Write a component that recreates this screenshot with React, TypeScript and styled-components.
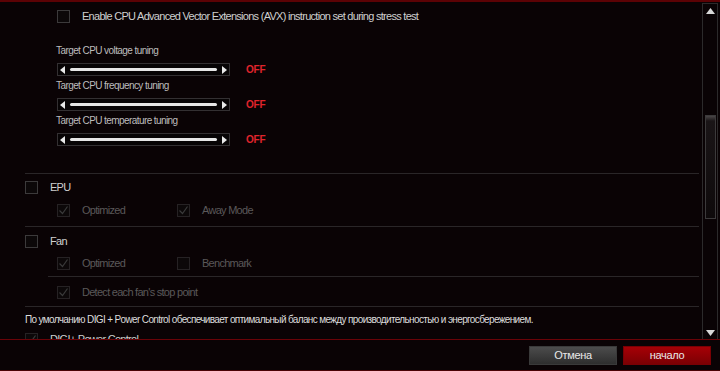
import styled, { createGlobalStyle } from "styled-components";

const Global = createGlobalStyle`
  html, body {
    margin: 0;
    padding: 0;
    background: #0a0305;
  }
  body {
    font-family: "Liberation Sans", Arial, sans-serif;
  }
`;

function Check({ checked, dim }: { checked?: boolean; dim?: boolean }) {
  return (
    <Box $dim={dim}>
      {checked && (
        <svg width="11" height="11" viewBox="0 0 11 11">
          <path d="M1.5 5.5 L4.5 8.5 L9.5 1.5" fill="none" stroke="#3a3a3a" strokeWidth="1.2" />
        </svg>
      )}
    </Box>
  );
}

function Slider() {
  return (
    <SliderRow>
      <SliderBox>
        <svg width="5" height="8" viewBox="0 0 5 8">
          <path d="M5 0 L0 4 L5 8 Z" fill="#e8e8e8" />
        </svg>
        <Track />
        <svg width="5" height="8" viewBox="0 0 5 8">
          <path d="M0 0 L5 4 L0 8 Z" fill="#e8e8e8" />
        </svg>
      </SliderBox>
      <Off>OFF</Off>
    </SliderRow>
  );
}

export default function App() {
  return (
    <Window>
      <Global />
      <Main>
        <Content>
          <Row $indent={32} $top={8}>
            <Check />
            <Label>Enable CPU Advanced Vector Extensions (AVX) instruction set during stress test</Label>
          </Row>
          <Tuning>
            <SmallLabel>Target CPU voltage tuning</SmallLabel>
            <Slider />
            <SmallLabel>Target CPU frequency tuning</SmallLabel>
            <Slider />
            <SmallLabel>Target CPU temperature tuning</SmallLabel>
            <Slider />
          </Tuning>
          <Divider $top={27} />
          <Row $indent={0} $top={7}>
            <Check />
            <Label>EPU</Label>
          </Row>
          <Row $indent={32} $top={10}>
            <Option>
              <Check checked dim />
              <Label $dim>Optimized</Label>
            </Option>
            <Check checked dim />
            <Label $dim>Away Mode</Label>
          </Row>
          <Divider $top={9} />
          <Row $indent={0} $top={8}>
            <Check />
            <Label>Fan</Label>
          </Row>
          <Row $indent={32} $top={9}>
            <Option>
              <Check checked dim />
              <Label $dim>Optimized</Label>
            </Option>
            <Check dim />
            <Label $dim>Benchmark</Label>
          </Row>
          <Divider $top={6} $indent={23} />
          <Row $indent={32} $top={9}>
            <Check checked dim />
            <Label $dim>Detect each fan's stop point</Label>
          </Row>
          <Divider $top={7} />
          <Note>
            По умолчанию DIGI + Power Control обеспечивает оптимальный баланс между производительностью и энергосбережением.
          </Note>
          <Row $indent={0} $top={6}>
            <Check checked dim />
            <Label>DIGI+ Power Control</Label>
          </Row>
        </Content>
        <Scrollbar>
          <svg width="9" height="6" viewBox="0 0 9 6">
            <path d="M0 6 L4.5 0 L9 6 Z" fill="#d8d8d8" />
          </svg>
          <ScrollTrack>
            <Thumb />
          </ScrollTrack>
          <svg width="9" height="6" viewBox="0 0 9 6">
            <path d="M0 0 L4.5 6 L9 0 Z" fill="#d8d8d8" />
          </svg>
        </Scrollbar>
      </Main>
      <Footer>
        <Button>Отмена</Button>
        <Button $primary>начало</Button>
      </Footer>
    </Window>
  );
}

const Window = styled.div`
  width: 720px;
  height: 371px;
  display: flex;
  flex-direction: column;
  background: #0a0305;
  border-top: 2px solid #5c0205;
  box-sizing: border-box;
  overflow: hidden;
`;

const Main = styled.div`
  display: flex;
  height: 337px;
  border-bottom: 1px solid #6a0308;
`;

const Content = styled.div`
  flex: 1;
  overflow: hidden;
  padding-left: 25px;
  padding-right: 3px;
`;

const Row = styled.div<{ $indent: number; $top: number }>`
  display: flex;
  align-items: center;
  height: 13px;
  margin-left: ${(p) => p.$indent}px;
  margin-top: ${(p) => p.$top}px;
  gap: 12px;
`;

const Option = styled.div`
  display: flex;
  align-items: center;
  gap: 12px;
  width: 108px;
`;

const Box = styled.div<{ $dim?: boolean }>`
  width: 13px;
  height: 13px;
  box-sizing: border-box;
  flex: none;
  border: 1px solid ${(p) => (p.$dim ? "#262224" : "#3c3a3b")};
  background: #0c0809;
  display: flex;
  align-items: center;
  justify-content: center;
`;

const Label = styled.span<{ $dim?: boolean }>`
  font-size: 11px;
  letter-spacing: -0.72px;
  line-height: 13px;
  color: ${(p) => (p.$dim ? "#5a5859" : "#cfcfcf")};
  white-space: nowrap;
`;

const Tuning = styled.div`
  margin-left: 31px;
  margin-top: 21px;
  display: flex;
  flex-direction: column;
`;

const SmallLabel = styled.div`
  font-size: 10px;
  letter-spacing: -0.58px;
  line-height: 14px;
  height: 14px;
  color: #bdbdbd;
  margin-top: 3px;
  &:first-child {
    margin-top: 0;
  }
`;

const SliderRow = styled.div`
  display: flex;
  align-items: center;
  margin-top: 5px;
  margin-left: 1px;
`;

const SliderBox = styled.div`
  width: 173px;
  height: 13px;
  box-sizing: border-box;
  border: 1px solid #333032;
  background: #070405;
  display: flex;
  align-items: center;
  padding: 0 2px 0 2px;
  gap: 5px;
`;

const Track = styled.div`
  flex: 1;
  height: 3px;
  border-radius: 2px;
  background: #e6e6e6;
`;

const Off = styled.span`
  margin-left: 16px;
  font-size: 10px;
  font-weight: bold;
  letter-spacing: -0.2px;
  color: #e0242c;
`;

const Divider = styled.div<{ $top: number; $indent?: number }>`
  height: 1px;
  background: #2a2628;
  margin-top: ${(p) => p.$top}px;
  margin-left: ${(p) => p.$indent || 0}px;
`;

const Note = styled.div`
  margin-top: 6px;
  font-size: 10px;
  letter-spacing: -0.64px;
  line-height: 14px;
  color: #dcdcdc;
  white-space: nowrap;
`;

const Scrollbar = styled.div`
  width: 16px;
  margin: 1px 2px 0 0;
  box-sizing: border-box;
  border: 1px solid #2c2a2b;
  border-bottom: none;
  display: flex;
  flex-direction: column;
  align-items: center;
  padding: 4px 0 3px;
  gap: 4px;
`;

const ScrollTrack = styled.div`
  flex: 1;
  width: 100%;
  padding-top: 97px;
  box-sizing: border-box;
  display: flex;
  justify-content: center;
`;

const Thumb = styled.div`
  width: 11px;
  height: 104px;
  box-sizing: border-box;
  border: 1px solid #3c3a3b;
  background: linear-gradient(#4a4647 0px, #1a1517 5px, #0e0a0b 100%);
`;

const Footer = styled.div`
  flex: 1;
  display: flex;
  justify-content: flex-end;
  align-items: center;
  gap: 6px;
  padding-right: 9px;
  border-bottom: 1px solid #4a0205;
`;

const Button = styled.button<{ $primary?: boolean }>`
  width: 88px;
  height: 19px;
  border: 1px solid ${(p) => (p.$primary ? "#7a0004" : "#3a3a3a")};
  background: ${(p) =>
    p.$primary
      ? "linear-gradient(#a60006, #7c0003)"
      : "linear-gradient(#4c4c4c, #2e2e2e)"};
  color: #e8e8e8;
  font-family: inherit;
  font-size: 11px;
  letter-spacing: -0.3px;
  padding: 0;
`;
